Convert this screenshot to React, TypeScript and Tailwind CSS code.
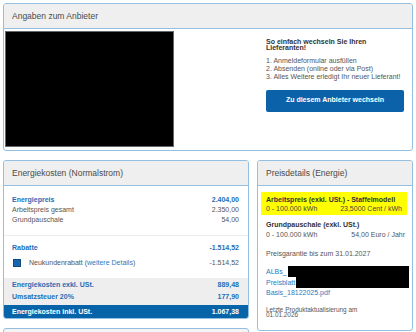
import React from 'react';

const font = "font-['Liberation_Sans',Arial,sans-serif]";

function PanelHeader({ title }: { title: string }) {
  return (
    <div className="h-[25px] bg-[#efefef] border-b border-[#93bfe2] flex items-center pl-[8px] text-[8.5px] text-[#4a4a4a]">
      {title}
    </div>
  );
}

function Row({ label, value, strong = false }: { label: React.ReactNode; value: string; strong?: boolean }) {
  return (
    <div className={`flex justify-between leading-[10px] ${strong ? 'font-bold text-[#1f6db5]' : 'text-[#555]'}`}>
      <span>{label}</span>
      <span>{value}</span>
    </div>
  );
}

export default function App() {
  return (
    <div className={`${font} w-[416px] h-[332px] overflow-hidden bg-white px-[3px] pt-[3px] text-[7px]`}>
      {/* Anbieter */}
      <div className="h-[148px] border border-[#93bfe2] rounded-[3px] overflow-hidden flex flex-col">
        <PanelHeader title="Angaben zum Anbieter" />
        <div className="flex flex-1">
          <div className="ml-[1px] mt-[2px] w-[169px] h-[116px] bg-black border border-[#666]" />
          <div className="ml-auto mr-[8px] mt-[10px] w-[138px]">
            <div className="font-bold text-[#333] leading-[5.7px]">
              So einfach wechseln Sie Ihren
              <br />
              Lieferanten!
            </div>
            <ol className="mt-[7px] leading-[7.7px] text-[#555]">
              <li>1. Anmeldeformular ausfüllen</li>
              <li>2. Absenden (online oder via Post)</li>
              <li>3. Alles Weitere erledigt Ihr neuer Lieferant!</li>
            </ol>
            <button className="mt-[9px] w-full h-[22px] rounded-[2px] bg-[#0c62a9] text-white font-bold text-[7px]">
              Zu diesem Anbieter wechseln
            </button>
          </div>
        </div>
      </div>

      <div className="mt-[9px] grid grid-cols-[246px_156px] gap-x-[8px] items-start">
        <div>
          {/* Energiekosten */}
          <div className="border border-[#93bfe2] rounded-[3px] overflow-hidden">
            <PanelHeader title="Energiekosten (Normalstrom)" />
            <div className="pl-[8px] pr-[9px] pt-[9px] pb-[10px] border-b border-[#ececec]">
              <Row label="Energiepreis" value="2.404,00" strong />
              <Row label="Arbeitspreis gesamt" value="2.350,00" />
              <Row label="Grundpauschale" value="54,00" />
            </div>
            <div className="pl-[8px] pr-[9px] pt-[7px] pb-[9px]">
              <Row label="Rabatte" value="-1.514,52" strong />
              <div className="mt-[4px] h-[12px] flex items-center justify-between text-[#555]">
                <div className="flex items-center">
                  <span className="ml-[1px] w-[8px] h-[8px] bg-[#1a66ad] border border-[#0f4c86]" />
                  <span className="ml-[8px]">
                    Neukundenrabatt (<span className="text-[#2a7bc1]">weitere Details</span>)
                  </span>
                </div>
                <span>-1.514,52</span>
              </div>
            </div>
            <div className="bg-[#eeeeee] pl-[8px] pr-[9px] pt-[1px] pb-[2px] font-bold text-[#1f6db5]">
              <div className="flex justify-between leading-[12px]">
                <span>Energiekosten exkl. USt.</span>
                <span>889,48</span>
              </div>
              <div className="flex justify-between leading-[12px]">
                <span>Umsatzsteuer 20%</span>
                <span>177,90</span>
              </div>
            </div>
            <div className="bg-[#0864a9] text-white font-bold h-[13px] leading-[13px] pl-[8px] pr-[9px] flex justify-between">
              <span>Energiekosten inkl. USt.</span>
              <span>1.067,38</span>
            </div>
          </div>
          <div className="mt-[9px] h-[40px] border border-[#93bfe2] rounded-[3px] bg-[#f4f4f4]" />
        </div>

        {/* Preisdetails */}
        <div className="border border-[#93bfe2] rounded-[3px] overflow-hidden">
          <PanelHeader title="Preisdetails (Energie)" />
          <div className="pb-[12px]">
            <div className="mt-[6px] ml-[3px] mr-[5px] bg-[#ffff00] px-[5px] pt-[2.5px] pb-[1.5px] leading-[9.3px]">
              <div className="font-bold text-[#333]">Arbeitspreis (exkl. USt.) - Staffelmodell</div>
              <div className="flex justify-between text-[#444]">
                <span>0 - 100.000 kWh</span>
                <span>23,5000 Cent / kWh</span>
              </div>
            </div>
            <div className="pl-[8px] pr-[7px] mt-[5px] leading-[10px]">
              <div className="font-bold text-[#333]">Grundpauschale (exkl. USt.)</div>
              <div className="flex justify-between text-[#555]">
                <span>0 - 100.000 kWh</span>
                <span>54,00 Euro / Jahr</span>
              </div>
              <div className="mt-[9px] text-[#555]">Preisgarantie bis zum 31.01.2027</div>
              <div className="mt-[7px] text-[#2a7bc1]">
                <div className="flex h-[11px] leading-[11px]">
                  <span className="shrink-0">ALBs_</span>
                  <span className="flex-1 -mr-[4px] ml-[1px] bg-black" />
                </div>
                <div className="flex h-[11px] leading-[11px]">
                  <span className="shrink-0">Preisblatt</span>
                  <span className="flex-1 -mr-[4px] ml-[1px] bg-black" />
                </div>
                <div className="leading-[10px]">Basis_18122025.pdf</div>
              </div>
              <div className="mt-[9px] text-[6.4px] leading-[5.6px] text-[#555]">
                Letzte Produktaktualisierung am
                <br />
                01.01.2026
              </div>
            </div>
          </div>
        </div>
      </div>
    </div>
  );
}
